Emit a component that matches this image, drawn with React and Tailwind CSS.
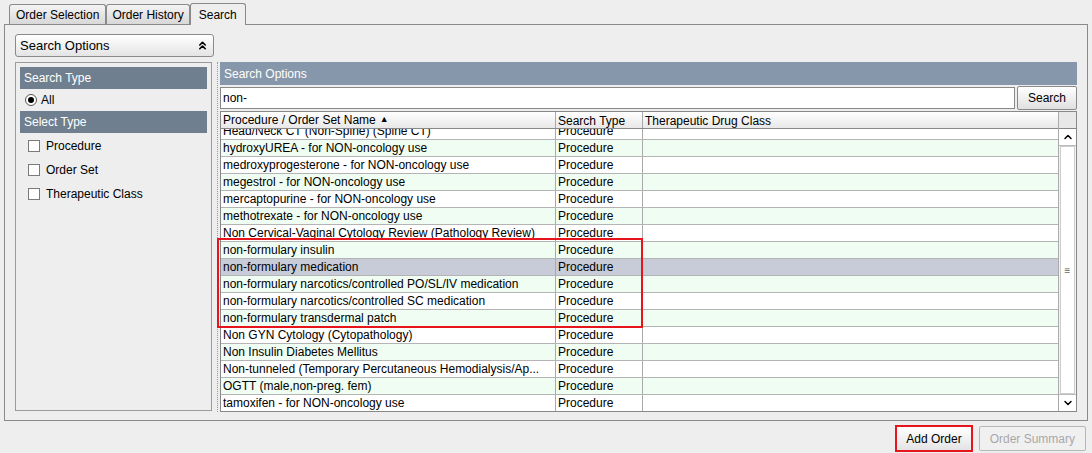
import { ChevronsUp, ChevronUp, ChevronDown } from "lucide-react";

const rows = [
  "Head/Neck CT (Non-Spine) (Spine CT)",
  "hydroxyUREA - for NON-oncology use",
  "medroxyprogesterone - for NON-oncology use",
  "megestrol - for NON-oncology use",
  "mercaptopurine - for NON-oncology use",
  "methotrexate - for NON-oncology use",
  "Non Cervical-Vaginal Cytology Review (Pathology Review)",
  "non-formulary insulin",
  "non-formulary medication",
  "non-formulary narcotics/controlled PO/SL/IV medication",
  "non-formulary narcotics/controlled SC medication",
  "non-formulary transdermal patch",
  "Non GYN Cytology (Cytopathology)",
  "Non Insulin Diabetes Mellitus",
  "Non-tunneled (Temporary Percutaneous Hemodialysis/Ap...",
  "OGTT (male,non-preg. fem)",
  "tamoxifen - for NON-oncology use",
];

function Check({ label }) {
  return (
    <div className="flex items-center gap-[6px] h-[24px] pl-[8px]">
      <div className="w-[12px] h-[12px] border border-[#7a7a7a] bg-white" />
      <span>{label}</span>
    </div>
  );
}

export default function App() {
  return (
    <div className="w-[1092px] h-[453px] bg-[#eeeeee] text-[12px] text-black overflow-hidden" style={{ fontFamily: "'Liberation Sans', Arial, sans-serif" }}>
      <div className="flex items-end h-[24px] pl-[9px] pt-[3px]">
        <div className="h-[20px] px-[6px] flex items-center border border-[#8a8a8a] border-b-0 rounded-t-[3px] bg-gradient-to-b from-[#f4f4f4] to-[#d8d8d8]">Order Selection</div>
        <div className="h-[20px] px-[5px] flex items-center border border-[#8a8a8a] border-b-0 rounded-t-[3px] bg-gradient-to-b from-[#f4f4f4] to-[#d8d8d8]">Order History</div>
        <div className="h-[22px] px-[8px] flex items-center border border-[#8a8a8a] border-b-0 rounded-t-[3px] bg-[#eeeeee] relative top-[1px]">Search</div>
      </div>
      <div className="mx-[4px] h-[397px] border border-[#8a8a8a] px-[10px] pt-[9px]">
        <div className="w-[199px] h-[23px] border border-[#8a8a8a] rounded-[3px] bg-gradient-to-b from-white to-[#e4e4e4] flex items-center justify-between px-[4px] text-[13px]">
          <span>Search Options</span>
          <ChevronsUp size={13} strokeWidth={3} />
        </div>
        <div className="flex mt-[5px] gap-[5px]">
          <div className="w-[199px] h-[349px] border border-[#9a9a9a] p-[4px]">
            <div className="h-[22px] bg-[#6f7f8f] text-white flex items-center pl-[4px]">Search Type</div>
            <div className="flex items-center gap-[4px] h-[22px] pl-[5px]">
              <div className="w-[12px] h-[12px] rounded-full border border-[#555] bg-white flex items-center justify-center"><div className="w-[6px] h-[6px] rounded-full bg-black" /></div>
              <span>All</span>
            </div>
            <div className="h-[22px] bg-[#6f7f8f] text-white flex items-center pl-[4px]">Select Type</div>
            <div className="pt-[1px]">
              <Check label="Procedure" />
              <Check label="Order Set" />
              <Check label="Therapeutic Class" />
            </div>
          </div>
          <div className="w-[860px] border-l border-dotted border-[#999] pl-[2px] flex flex-col">
            <div className="h-[23px] bg-[#8797ab] text-white flex items-center pl-[4px]">Search Options</div>
            <div className="flex h-[24px] items-center mt-[1px]">
              <div className="flex-1 h-[22px] border border-[#888] bg-white flex items-center pl-[2px]">non-</div>
              <div className="ml-[2px] h-[24px] px-[10px] border border-[#8a8a8a] rounded-[2px] bg-gradient-to-b from-white to-[#e0e0e0] flex items-center">Search</div>
            </div>
            <div className="relative mt-[1px] h-[301px] border border-[#888] bg-white flex">
              <div className="w-[839px] flex flex-col">
                <div className="flex h-[17px] border-b border-[#888] bg-gradient-to-b from-white to-[#e8e8e8] shrink-0">
                  <div className="w-[335px] border-r border-[#aaa] pl-[2px] flex items-center gap-[4px]">Procedure / Order Set Name <span className="text-[9px]">▲</span></div>
                  <div className="w-[87px] border-r border-[#aaa] pl-[2px]">Search Type</div>
                  <div className="flex-1 pl-[2px]">Therapeutic Drug Class</div>
                </div>
                <div className="flex-1 overflow-hidden">
                  <div className="-mt-[6px]">
                    {rows.map((r, i) => {
                      const sel = i === 8;
                      const bg = sel ? "bg-[#c8ccd8]" : i % 2 ? "bg-[#effdf3]" : "bg-white";
                      return (
                        <div key={i} className={`flex h-[17px] border-b border-[#b4b4b4] ${bg}`}>
                          <div className="w-[335px] border-r border-[#aaa] pl-[2px] whitespace-nowrap overflow-hidden leading-[16px]">{r}</div>
                          <div className="w-[87px] border-r border-[#aaa] pl-[2px] leading-[16px]">Procedure</div>
                          <div className="flex-1" />
                        </div>
                      );
                    })}
                  </div>
                </div>
              </div>
              <div className="w-[18px] border-l border-[#aaa] bg-[#f4f4f4] flex flex-col">
                <div className="h-[17px] border-b border-[#888] bg-[#e8e8e8]" />
                <div className="h-[17px] border-b border-[#bbb] bg-white flex items-center justify-center"><ChevronUp size={12} strokeWidth={3} /></div>
                <div className="flex-1 bg-white mx-[1px] border border-[#ccc] flex items-center justify-center text-[10px] text-[#666]">≡</div>
                <div className="h-[17px] border-t border-[#bbb] bg-white flex items-center justify-center"><ChevronDown size={12} strokeWidth={3} /></div>
              </div>
              <div className="absolute left-[-4px] top-[126px] w-[426px] h-[90px] border-2 border-[#e8141b] pointer-events-none" />
            </div>
          </div>
        </div>
      </div>
      <div className="flex justify-end gap-[6px] pr-[6px] mt-[4px]">
        <div className="h-[27px] px-[9px] border-2 border-[#e8141b] bg-gradient-to-b from-white to-[#e4e4e4] flex items-center">Add Order</div>
        <div className="h-[25px] mt-[1px] px-[10px] border border-[#b8b8b8] rounded-[2px] bg-[#f0f0f0] text-[#a8a8a8] flex items-center">Order Summary</div>
      </div>
    </div>
  );
}
